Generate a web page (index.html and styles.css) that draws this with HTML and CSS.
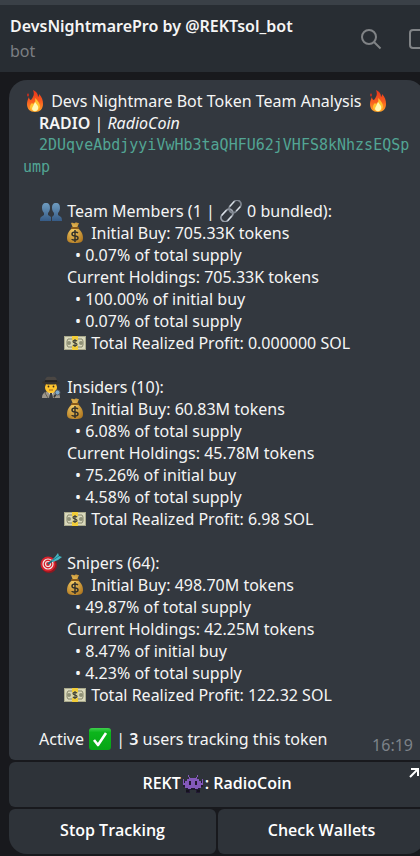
FILE: index.html
```html
<!DOCTYPE html>
<html lang="en">
<head>
    <meta charset="UTF-8">
    <meta name="viewport" content="width=device-width, initial-scale=1.0">
    <title>DevsNightmarePro</title>
    <link rel="stylesheet" href="styles.css">
</head>
<body>
    <!-- Emoji shapes -->
    <svg class="sprites" aria-hidden="true">
        <defs>
            <linearGradient id="flameFill" x1="0" y1="0" x2="0" y2="1">
                <stop offset="0" stop-color="#e8321c"/>
                <stop offset="0.55" stop-color="#f9601f"/>
                <stop offset="1" stop-color="#ffa62b"/>
            </linearGradient>
            <linearGradient id="peopleFill" x1="0" y1="0" x2="0" y2="1">
                <stop offset="0" stop-color="#6f9cc0"/>
                <stop offset="1" stop-color="#365b86"/>
            </linearGradient>
            <linearGradient id="checkFill" x1="0" y1="0" x2="0" y2="1">
                <stop offset="0" stop-color="#3fd04d"/>
                <stop offset="0.2" stop-color="#0cb51c"/>
                <stop offset="1" stop-color="#06a516"/>
            </linearGradient>
            <radialGradient id="bagFill" cx="0.4" cy="0.4" r="0.7">
                <stop offset="0" stop-color="#f5cd66"/>
                <stop offset="1" stop-color="#b27a22"/>
            </radialGradient>
        </defs>
        <symbol id="fire" viewBox="0 0 22 22">
            <path d="M9 0c4 2 5 4 5 7 1-1 1-2 1-3 3 3 4 6 4 10 0 5-3 8-8 8s-8-3-8-8c0-3 1-5 2-7 0 2 1 3 2 3 2-3 4-5 2-10z" fill="url(#flameFill)"/>
            <path d="M3 5l1-2 1 2-1 2z" fill="#d92d1c"/>
            <path d="M11 8c3 3 5 5 5 9-1 3-3 4-5 4s-5-1-5-4c0-2 1-3 2-4l1 1c2-1 3-3 2-6z" fill="#ffc22e"/>
            <path d="M11 12c2 3 4 4 3 7-1 3-5 3-6 0 0-2 2-4 3-7z" fill="#fff8b5"/>
        </symbol>
        <symbol id="people" viewBox="0 0 22 22">
            <g fill="url(#peopleFill)">
                <path d="M6 3c3 0 4 2 4 5 0 2-1 4-2 5v2l3 2v4H0c0-4 1-4 4-6v-2C3 12 2 10 2 8c0-3 1-5 4-5z"/>
                <path d="M16 3c3 0 4 2 4 5 0 2-1 4-2 5v2c3 2 4 2 4 6H12v-4l2-2v-2c-1-1-2-3-2-5 0-3 1-5 4-5z"/>
            </g>
        </symbol>
        <symbol id="bag" viewBox="0 0 22 22">
            <path d="M7 1c2-1 3 1 4 0s2 0 4 0l-2 5c4 2 6 6 6 10 0 4-2 5-8 5s-8-1-8-5c0-4 2-8 6-10z" fill="url(#bagFill)"/>
            <path d="M8 6h6" stroke="#8a5a19" stroke-width="2" stroke-linecap="round"/>
            <path d="M14 11c-1-1-2-1-3-1-4 0-4 4 0 4s4 4 0 4c-1 0-3 0-3-1M11 8v12" fill="none" stroke="#35322a" stroke-width="1.5"/>
        </symbol>
        <symbol id="cash" viewBox="0 0 22 22">
            <path d="M0 4h22v14H0z" fill="#a9a98c"/>
            <path d="M1 5h20v12H1z" fill="#d9d8bb"/>
            <path d="M4 7h14l1 2v4l-1 2H4l-1-2V9z" fill="none" stroke="#85866c"/>
            <circle cx="5" cy="11" r="2" fill="#8e9076"/>
            <circle cx="17" cy="11" r="2" fill="#8e9076"/>
            <path d="M8 4h6v14H8z" fill="#f2cd38"/>
            <circle cx="11" cy="11" r="3.6" fill="#d9d3a0"/>
            <path d="M13 9c-1-1-4-1-4 .5 0 2 4 1 4 3 0 1.500-3 1.500-4 .5M11 7v8" fill="none" stroke="#454538" stroke-width="1.2"/>
        </symbol>
        <symbol id="link" viewBox="0 0 22 22">
            <g fill="none" stroke-linecap="round" transform="rotate(-48 11 11)">
                <rect x="-2" y="7" width="14" height="8" rx="4" stroke="#9aa0aa" stroke-width="1.800"/>
                <rect x="10" y="7" width="14" height="8" rx="4" stroke="#7f8690" stroke-width="1.800"/>
                <path d="M2 7h6M14 7h6M2 15h5M15 15h5" stroke="#dce2e8" stroke-width="1.200"/>
            </g>
        </symbol>
        <symbol id="detective" viewBox="0 0 22 22">
            <path d="M2 22c0-4 2-6 6-7h6c4 1 6 3 6 7z" fill="#9c968b"/>
            <path d="M8 15h6l-3 7z" fill="#eceae4"/>
            <path d="M10 17h2l1 5H9z" fill="#3a3d42"/>
            <path d="M7 15l-2 2 3 5M15 15l2 2-3 5" fill="none" stroke="#665f54"/>
            <path d="M5 7h12v4c0 4-3 6-6 6s-6-2-6-6z" fill="#ffc52e"/>
            <path d="M5 7v4l1-3M17 7v4l-1-3" fill="#4a3424"/>
            <circle cx="8.500" cy="10.500" r="0.900" fill="#3b2a1c"/>
            <circle cx="13.500" cy="10.500" r="0.900" fill="#3b2a1c"/>
            <path d="M9 14h4" stroke="#a26319"/>
            <path d="M5 6c0-5 2-6 6-5 4-1 6 0 6 5z" fill="#4a4643"/>
            <ellipse cx="11" cy="6.500" rx="9" ry="2" fill="#35322f"/>
            <path d="M5 5h12" stroke="#1f1e1e" stroke-width="1.500"/>
            <path d="M16 18l-2 3" stroke="#333" stroke-width="1.500"/>
            <circle cx="17.500" cy="16.500" r="2.500" fill="#7fa9cb" stroke="#555c63"/>
        </symbol>
        <symbol id="dart" viewBox="0 0 22 22">
            <ellipse cx="9" cy="13" rx="8" ry="8" fill="#8e1820"/>
            <circle cx="8" cy="12" r="7.500" fill="#d9222c"/>
            <circle cx="8" cy="12" r="5" fill="none" stroke="#f0e9e8" stroke-width="1.200"/>
            <circle cx="8" cy="12" r="2.500" fill="none" stroke="#f0e9e8" stroke-width="1.200"/>
            <path d="M8 12l8-6" stroke="#1c6e7c" stroke-width="1.800"/>
            <path d="M12 8l3-3 3-4 1 3 3 1-4 3-5 2z" fill="#45b7c4"/>
            <path d="M13 8l6-4" stroke="#1b7d8d"/>
        </symbol>
        <symbol id="check" viewBox="0 0 22 22">
            <rect width="22" height="22" rx="3" fill="url(#checkFill)"/>
            <path d="M5 12l4 5 8-12" fill="none" stroke="#fff" stroke-width="2.600" stroke-linejoin="round"/>
        </symbol>
        <symbol id="monster" viewBox="0 0 22 22">
            <path d="M3 9h16v7h-1v5h-4v-3H8v3H4v-5H3zM1 9h3v6H1zM18 9h3v6h-3z" fill="#221a33"/>
            <path d="M6 3h1v2h1v1h6V5h1V3h1v2h-1v2h2v2h2v2h1V7h1v6h-2v3h-3v1h-3v-1H9v1H6v-1H3v-3H1V7h1v4h1V9h2V7h2V5H6z" fill="#8358ba"/>
            <path d="M7 9h2v4H7zM13 9h2v4h-2z" fill="#21182f"/>
            <path d="M4 18h3v2H4zM15 18h3v2h-3z" fill="#15121e"/>
        </symbol>
    </svg>

    <header class="chat-header">
        <div class="chat-info">
            <h1 class="chat-title">DevsNightmarePro by @REKTsol_bot</h1>
            <p class="chat-status">bot</p>
        </div>
        <div class="chat-actions">
            <button type="button" class="icon-button" aria-label="Search">
                <svg viewBox="0 0 22 22" width="22" height="22"><circle cx="9" cy="9" r="7"/><path d="M14 14L20.500 20.500"/></svg>
            </button>
            <button type="button" class="icon-button" aria-label="Side panel">
                <svg viewBox="0 0 22 22" width="22" height="22"><rect x="1" y="2" width="20" height="18" rx="3"/><path d="M14 2v18"/></svg>
            </button>
        </div>
    </header>

    <main class="chat">
        <article class="bubble">
            <p><svg class="emoji"><use href="#fire"/></svg> Devs Nightmare Bot Token Team Analysis <svg class="emoji"><use href="#fire"/></svg></p>
            <p class="indent"><b>RADIO</b> | <i>RadioCoin</i></p>
            <p class="address">2DUqveAbdjyyiVwHb3taQHFU62jVHFS8kNhzsEQSpump</p>

            <section class="group">
                <p class="indent"><svg class="emoji"><use href="#people"/></svg> Team Members (1 | <svg class="emoji"><use href="#link"/></svg> 0 bundled):</p>
                <p class="detail"><svg class="emoji"><use href="#bag"/></svg> Initial Buy: 705.33K tokens</p>
                <p class="point">• 0.07% of total supply</p>
                <p class="holdings">Current Holdings: 705.33K tokens</p>
                <p class="point">• 100.00% of initial buy</p>
                <p class="point">• 0.07% of total supply</p>
                <p class="detail"><svg class="emoji"><use href="#cash"/></svg> Total Realized Profit: 0.000000 SOL</p>
            </section>

            <section class="group">
                <p class="indent"><svg class="emoji"><use href="#detective"/></svg> Insiders (10):</p>
                <p class="detail"><svg class="emoji"><use href="#bag"/></svg> Initial Buy: 60.83M tokens</p>
                <p class="point">• 6.08% of total supply</p>
                <p class="holdings">Current Holdings: 45.78M tokens</p>
                <p class="point">• 75.26% of initial buy</p>
                <p class="point">• 4.58% of total supply</p>
                <p class="detail"><svg class="emoji"><use href="#cash"/></svg> Total Realized Profit: 6.98 SOL</p>
            </section>

            <section class="group">
                <p class="indent"><svg class="emoji"><use href="#dart"/></svg> Snipers (64):</p>
                <p class="detail"><svg class="emoji"><use href="#bag"/></svg> Initial Buy: 498.70M tokens</p>
                <p class="point">• 49.87% of total supply</p>
                <p class="holdings">Current Holdings: 42.25M tokens</p>
                <p class="point">• 8.47% of initial buy</p>
                <p class="point">• 4.23% of total supply</p>
                <p class="detail"><svg class="emoji"><use href="#cash"/></svg> Total Realized Profit: 122.32 SOL</p>
            </section>

            <footer class="group message-footer">
                <p class="indent">Active <svg class="emoji"><use href="#check"/></svg> | <b>3</b> users tracking this token</p>
                <time class="time">16:19</time>
            </footer>
        </article>

        <!-- Inline keyboard -->
        <div class="keyboard">
            <a class="key key-wide" href="#">
                <span>REKT<svg class="emoji"><use href="#monster"/></svg>: RadioCoin</span>
                <svg class="key-arrow" viewBox="0 0 10 10" width="10" height="10"><path d="M2 1h7v7M9 1L1 9"/></svg>
            </a>
            <button type="button" class="key key-left">Stop Tracking</button>
            <button type="button" class="key key-right">Check Wallets</button>
        </div>
    </main>
</body>
</html>
```
FILE: styles.css
```css
* {
    box-sizing: border-box;
}
body {
    margin: 0;
    background-color: #18191d;
    color: #f5f5f5;
    font-family: "Noto Sans", "Open Sans", sans-serif;
    font-size: 16px;
    line-height: 22px;
    overflow: hidden;
}
p, h1 {
    margin: 0;
}
b {
    font-weight: 600;
}
.sprites {
    position: absolute;
    width: 0;
    height: 0;
}
.chat-header {
    display: flex;
    justify-content: space-between;
    align-items: center;
    height: 72px;
    padding-left: 10px;
    border-top: 5px solid #3a4047;
    background-color: #282d33;
}
.chat-title {
    font-size: 16px;
    font-weight: 600;
    line-height: 25px;
}
.chat-status {
    color: #7c7f83;
    line-height: 25px;
}
.chat-actions {
    display: flex;
    gap: 27px;
    margin-right: -11px;
}
.icon-button {
    display: flex;
    padding: 0;
    border: none;
    background: none;
    cursor: pointer;
}
.icon-button svg {
    fill: none;
    stroke: #808386;
    stroke-width: 2;
}
.chat {
    padding: 8px 0 2px 9px;
    margin-right: -5px;
}
.bubble {
    padding: 10px 14px;
    border-radius: 18px 18px 6px 6px;
    background-color: #33383f;
}
.emoji {
    width: 22px;
    height: 22px;
    margin: 0 1px;
    vertical-align: top;
}
.indent {
    padding-left: 16px;
}
.address {
    text-indent: 16px;
    word-break: break-all;
    color: #52a594;
    font-family: "DejaVu Sans Mono", monospace;
    font-size: 15px;
}
.group {
    margin-top: 22px;
}
.detail {
    padding-left: 40px;
}
.holdings {
    padding-left: 44px;
}
.point {
    padding-left: 52px;
}
.message-footer {
    display: flex;
    justify-content: space-between;
}
.time {
    align-self: flex-end;
    margin: 0 -2px -6px 0;
    color: #7d8389;
}
.keyboard {
    display: grid;
    grid-template-columns: 1fr 1fr;
    gap: 2px;
    margin-top: 2px;
}
.key {
    display: flex;
    justify-content: center;
    align-items: center;
    height: 45px;
    padding: 0 0 4px;
    border: none;
    border-radius: 6px;
    background-color: #2e3339;
    color: #fff;
    font-family: "Open Sans", "Noto Sans", sans-serif;
    font-size: 16px;
    font-weight: 600;
    line-height: 22px;
    text-decoration: none;
    cursor: pointer;
}
.key:hover {
    background-color: #383e45;
}
.key-wide {
    position: relative;
    grid-column: 1 / -1;
}
.key-left {
    border-bottom-left-radius: 18px;
}
.key-right {
    border-bottom-right-radius: 18px;
}
.key-arrow {
    position: absolute;
    top: 6px;
    right: 6px;
    fill: none;
    stroke: #fff;
    stroke-width: 2;
}
```
